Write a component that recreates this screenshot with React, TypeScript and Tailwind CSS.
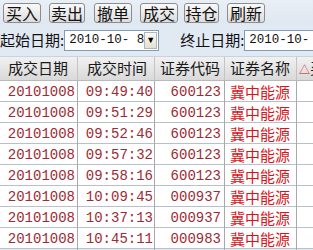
import React from 'react'

const rows = [
  ['20101008', '09:49:40', '600123'],
  ['20101008', '09:51:29', '600123'],
  ['20101008', '09:52:46', '600123'],
  ['20101008', '09:57:32', '600123'],
  ['20101008', '09:58:16', '600123'],
  ['20101008', '10:09:45', '000937'],
  ['20101008', '10:37:13', '000937'],
  ['20101008', '10:45:11', '000983'],
]

const cjk = { fontFamily: '"Noto Sans CJK SC", "Noto Sans", sans-serif' }
const mono = { fontFamily: '"Liberation Mono", "DejaVu Sans Mono", monospace' }

function ToolButton({ label, className }: { label: string; className: string }) {
  return (
    <button
      className={`h-[20px] rounded-[3px] border border-[#8c8c8c] bg-gradient-to-b from-[#fafafa] to-[#dcdcdc] text-[16px] leading-none text-[#111] ${className}`}
      style={cjk}
    >
      {label}
    </button>
  )
}

function DateBox({ value, width, arrow }: { value: string; width: string; arrow?: boolean }) {
  return (
    <div className={`flex h-[21px] items-center border border-[#7f9db9] bg-white ${width}`}>
      <span className="flex-1 whitespace-pre pl-[4px] text-[12.5px] leading-none text-[#111]" style={mono}>
        {value}
      </span>
      {arrow && (
        <span className="mr-[1px] flex h-[17px] w-[15px] items-center justify-center border border-[#b5b5b5] bg-gradient-to-b from-[#fbfbf6] to-[#e2e0d2] text-[9px] text-black">
          ▼
        </span>
      )}
    </div>
  )
}

export default function App() {
  return (
    <div className="h-[250px] w-[313px] overflow-hidden bg-[#e3ebf4]">
      {/* toolbar */}
      <div className="flex h-[24px] items-center bg-gradient-to-b from-[#e9eff6] to-[#dfe7f1] pl-[3px] pt-[1px]">
        <ToolButton label="买入" className="w-[38px]" />
        <ToolButton label="卖出" className="ml-[8px] w-[36px]" />
        <ToolButton label="撤单" className="ml-[9px] w-[38px]" />
        <ToolButton label="成交" className="ml-[8px] w-[38px]" />
        <ToolButton label="持仓" className="ml-[6px] w-[35px]" />
        <ToolButton label="刷新" className="ml-[8px] w-[38px]" />
      </div>

      {/* date filters */}
      <div className="flex h-[33px] items-center whitespace-nowrap border-b border-[#c9d3de] bg-[#e1e9f3]">
        <span className="w-[66px] text-[15px] text-[#111]" style={cjk}>
          起始日期:
        </span>
        <DateBox value="2010-10- 8" width="w-[95px]" arrow />
        <span className="ml-[21px] w-[66px] text-[15px] text-[#111]" style={cjk}>
          终止日期:
        </span>
        <DateBox value="2010-10-" width="w-[80px] shrink-0" />
      </div>

      {/* table */}
      <div className="bg-white">
        <div
          className="grid h-[24px] grid-cols-[78px_77px_70px_72px_1fr] items-center border-b border-[#b9b9b9] bg-gradient-to-b from-[#f1f1f1] to-[#d9d9d9] text-[15px] text-[#1a1a1a]"
          style={cjk}
        >
          <div className="border-r border-[#c4c4c4] pl-[8px]">成交日期</div>
          <div className="border-r border-[#c4c4c4] pl-[9px]">成交时间</div>
          <div className="border-r border-[#c4c4c4] pl-[5px]">证券代码</div>
          <div className="border-r border-[#c4c4c4] pl-[5px]">证券名称</div>
          <div className="whitespace-nowrap pl-[2px]">
            <span className="text-[11px] text-[#d01010]">△</span>买入
          </div>
        </div>
        {rows.map(([d, t, c], i) => (
          <div
            key={i}
            className="grid h-[21px] grid-cols-[78px_77px_70px_72px_1fr] items-center border-b border-[#b8c0c8] text-[14px] text-[#9e2a33]"
          >
            <div className="flex h-full items-center justify-end border-r border-[#a9a9a9] pr-[2px]" style={mono}>
              {d}
            </div>
            <div className="flex h-full items-center justify-end border-r border-[#a9a9a9] pr-[1px]" style={mono}>
              {t}
            </div>
            <div className="flex h-full items-center justify-end border-r border-[#a9a9a9] pr-[3px]" style={mono}>
              {c}
            </div>
            <div
              className="flex h-full items-center border-r border-[#a9a9a9] pl-[5px] text-[15px] text-[#d8141a]"
              style={cjk}
            >
              冀中能源
            </div>
            <div />
          </div>
        ))}
      </div>
    </div>
  )
}
